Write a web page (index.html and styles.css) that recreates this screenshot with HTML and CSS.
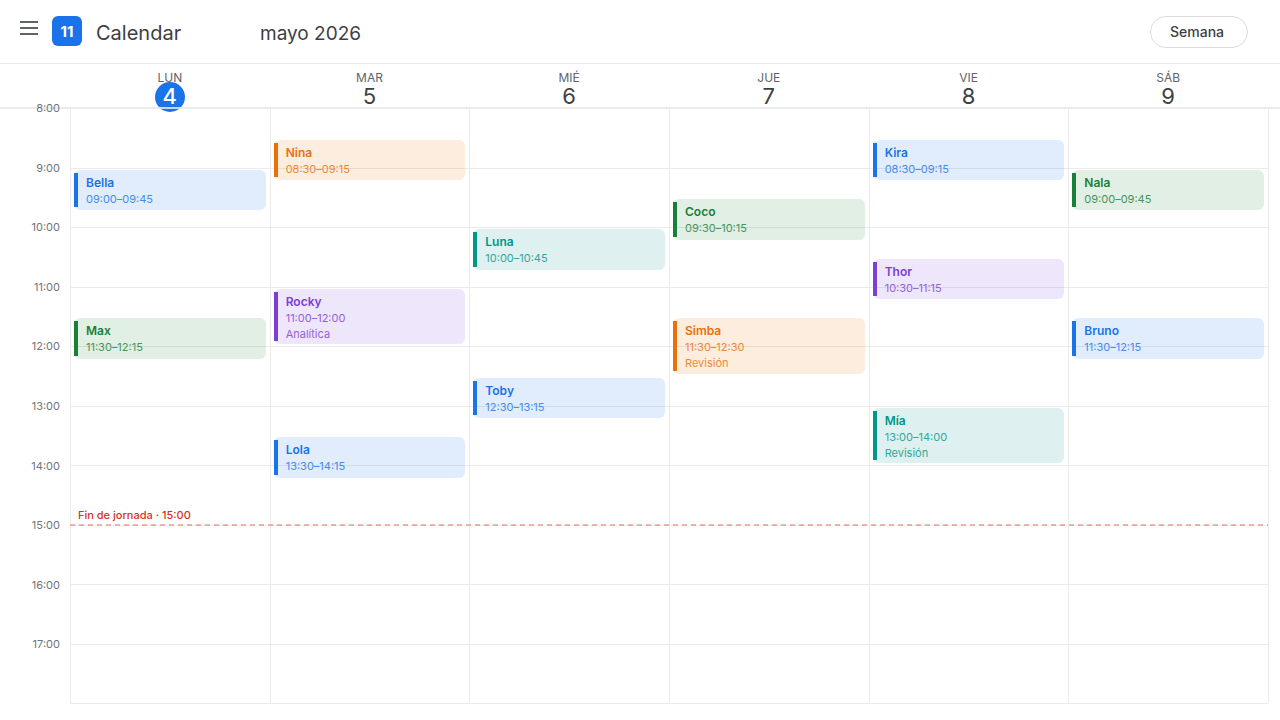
FILE: index.html
```
<!DOCTYPE html>
<html lang="es">
<head>
    <meta charset="UTF-8">
    <meta name="viewport" content="width=device-width, initial-scale=1.0">
    <title>Calendar</title>
    <link rel="stylesheet" href="styles.css">
</head>
<body>
    <header class="topbar">
        <button class="menu-btn" type="button">
            <svg width="18" height="14" viewBox="0 0 18 14" stroke="#5f6368" stroke-width="2">
                <path d="M0 1h18M0 7h18M0 13h18"/>
            </svg>
        </button>
        <div class="logo">11</div>
        <h1 class="brand">Calendar</h1>
        <h2 class="month">mayo 2026</h2>
        <button class="view-btn" type="button">Semana</button>
    </header>

    <div class="day-heads">
        <div class="day-head today"><span class="day-name">LUN</span><span class="day-num">4</span></div>
        <div class="day-head"><span class="day-name">MAR</span><span class="day-num">5</span></div>
        <div class="day-head"><span class="day-name">MIÉ</span><span class="day-num">6</span></div>
        <div class="day-head"><span class="day-name">JUE</span><span class="day-num">7</span></div>
        <div class="day-head"><span class="day-name">VIE</span><span class="day-num">8</span></div>
        <div class="day-head"><span class="day-name">SÁB</span><span class="day-num">9</span></div>
    </div>

    <main class="week">
        <div class="hours">
            <span>8:00</span>
            <span>9:00</span>
            <span>10:00</span>
            <span>11:00</span>
            <span>12:00</span>
            <span>13:00</span>
            <span>14:00</span>
            <span>15:00</span>
            <span>16:00</span>
            <span>17:00</span>
        </div>

        <div class="days">
            <div class="lines">
                <i></i><i></i><i></i><i></i><i></i><i></i><i></i><i></i><i></i><i></i>
            </div>

            <!-- each column has one row per quarter hour, starting at 8:00 -->
            <div class="day">
                <div class="event blue" style="grid-row: 5 / span 3"><b>Bella</b><span>09:00–09:45</span></div>
                <div class="event green" style="grid-row: 15 / span 3"><b>Max</b><span>11:30–12:15</span></div>
            </div>
            <div class="day">
                <div class="event orange" style="grid-row: 3 / span 3"><b>Nina</b><span>08:30–09:15</span></div>
                <div class="event purple" style="grid-row: 13 / span 4"><b>Rocky</b><span>11:00–12:00</span><span>Analítica</span></div>
                <div class="event blue" style="grid-row: 23 / span 3"><b>Lola</b><span>13:30–14:15</span></div>
            </div>
            <div class="day">
                <div class="event teal" style="grid-row: 9 / span 3"><b>Luna</b><span>10:00–10:45</span></div>
                <div class="event blue" style="grid-row: 19 / span 3"><b>Toby</b><span>12:30–13:15</span></div>
            </div>
            <div class="day">
                <div class="event green" style="grid-row: 7 / span 3"><b>Coco</b><span>09:30–10:15</span></div>
                <div class="event orange" style="grid-row: 15 / span 4"><b>Simba</b><span>11:30–12:30</span><span>Revisión</span></div>
            </div>
            <div class="day">
                <div class="event blue" style="grid-row: 3 / span 3"><b>Kira</b><span>08:30–09:15</span></div>
                <div class="event purple" style="grid-row: 11 / span 3"><b>Thor</b><span>10:30–11:15</span></div>
                <div class="event teal" style="grid-row: 21 / span 4"><b>Mía</b><span>13:00–14:00</span><span>Revisión</span></div>
            </div>
            <div class="day">
                <div class="event green" style="grid-row: 5 / span 3"><b>Nala</b><span>09:00–09:45</span></div>
                <div class="event blue" style="grid-row: 15 / span 3"><b>Bruno</b><span>11:30–12:15</span></div>
            </div>

            <div class="day-end" style="top: 70%">Fin de jornada · 15:00</div>
        </div>
    </main>
</body>
</html>
```

FILE: styles.css
```
* {
    box-sizing: border-box;
}
body {
    margin: 0;
    min-height: 100vh;
    display: flex;
    flex-direction: column;
    background-color: #fff;
    color: #3c4043;
    font-family: Inter, Arial, sans-serif;
}
button {
    font-family: inherit;
    color: inherit;
    cursor: pointer;
}

/* top bar */
.topbar {
    display: flex;
    align-items: center;
    height: 64px;
    padding: 0 32px 2px 20px;
    border-bottom: 1px solid #ebebeb;
}
.menu-btn {
    margin: 0 14px 6px 0;
    padding: 0;
    border: none;
    background: none;
    line-height: 0;
}
.logo {
    width: 30px;
    height: 30px;
    border-radius: 6px;
    background-color: #1a73e8;
    color: #fff;
    font-size: 15px;
    font-weight: 700;
    line-height: 32px;
    text-align: center;
}
.brand {
    width: 164px;
    margin: 4px 0 0 14px;
    font-size: 20px;
    font-weight: 400;
    line-height: 28px;
}
.month {
    margin: 6px 0 0;
    font-size: 19px;
    font-weight: 400;
    line-height: 28px;
}
.view-btn {
    margin: 2px 0 0 auto;
    width: 98px;
    height: 32px;
    padding: 0 4px 0 0;
    border: 1px solid #dadce0;
    border-radius: 16px;
    background-color: #fff;
    font-size: 14px;
    font-weight: 500;
}

/* day names */
.day-heads {
    display: grid;
    grid-template-columns: repeat(6, 1fr);
    height: 44px;
    padding: 6px 12px 0 70px;
}
.day-head {
    display: flex;
    flex-direction: column;
    align-items: center;
}
.day-name {
    color: #5f6368;
    font-size: 12px;
    line-height: 15px;
}
.day-num {
    width: 30px;
    height: 30px;
    margin-top: -3px;
    border-radius: 50%;
    font-size: 22px;
    line-height: 28px;
    text-align: center;
}
.today .day-num {
    background-color: #1a73e8;
    color: #fff;
    font-weight: 500;
}

/* week grid */
.week {
    flex: 1;
    display: grid;
    grid-template-columns: 70px 1fr;
    padding: 0 12px 16px 0;
    position: relative;
}
.week::before {
    content: "";
    position: absolute;
    left: 0;
    right: 0;
    top: -1px;
    height: 2px;
    background-color: rgba(232, 232, 232, 0.85);
}
.hours {
    display: grid;
    grid-template-rows: repeat(10, 1fr);
    padding-right: 10px;
    color: #70757a;
    font-size: 11px;
    line-height: 16px;
    text-align: right;
    position: relative;
}
.hours span {
    margin-top: -8px;
}
.days {
    display: grid;
    grid-template-columns: repeat(6, 1fr);
    border-bottom: 1px solid #ebebeb;
    position: relative;
}
.lines {
    position: absolute;
    inset: 0;
    display: grid;
    grid-template-rows: repeat(10, 1fr);
}
.lines i + i {
    border-top: 1px solid #ebebeb;
}
.day {
    display: grid;
    grid-template-rows: repeat(40, minmax(0, 1fr));
    box-shadow: inset 1px 0 #ebebeb, 1px 0 #ebebeb;
    position: relative;
}
.event {
    display: flex;
    flex-direction: column;
    margin: 2px 4px;
    padding: 5px 12px 0;
    border-radius: 6px;
    font-size: 11px;
    line-height: 16px;
    position: relative;
}
.event::before {
    content: "";
    position: absolute;
    left: 0;
    top: 3px;
    bottom: 3px;
    width: 4px;
    background-color: currentColor;
}
.event b {
    font-size: 12px;
    font-weight: 600;
}
.event span {
    opacity: 0.8;
}
.blue {
    color: #1a73e8;
    background-color: rgba(26, 115, 232, 0.13);
}
.green {
    color: #188038;
    background-color: rgba(24, 128, 56, 0.13);
}
.orange {
    color: #e8710a;
    background-color: rgba(232, 113, 10, 0.13);
}
.purple {
    color: #7b3fd6;
    background-color: rgba(123, 63, 214, 0.13);
}
.teal {
    color: #009688;
    background-color: rgba(0, 150, 136, 0.13);
}

/* end of the working day */
.day-end {
    position: absolute;
    left: 0;
    right: 0;
    height: 19px;
    margin-top: -18px;
    padding-left: 8px;
    color: #d93025;
    font-size: 11px;
    font-weight: 500;
    line-height: 16px;
}
.day-end::after {
    content: "";
    position: absolute;
    left: 0;
    right: 0;
    bottom: 0;
    height: 2px;
    background-image: linear-gradient(90deg, #d93025 5px, transparent 5px);
    background-size: 9px 2px;
    opacity: 0.35;
}
```
